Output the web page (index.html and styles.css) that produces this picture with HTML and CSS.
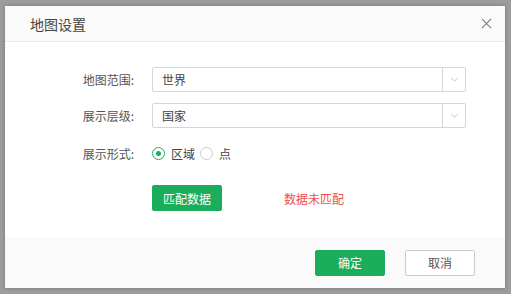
FILE: index.html
```html
<!DOCTYPE html>
<html>
<head>
  <title>地图设置</title>
  <link rel="stylesheet" href="styles.css">
</head>
<body>
  <div class="dialog">
    <!-- Header -->
    <div class="dialog-header">
      <span class="dialog-title">地图设置</span>
      <svg class="close-icon" viewBox="0 0 12 12" width="11" height="11">
        <path d="M1 1 L11 11 M11 1 L1 11" stroke="#777" stroke-width="1.1" fill="none"/>
      </svg>
    </div>
    <!-- Body -->
    <div class="dialog-body">
      <div class="form-row">
        <label class="form-label">地图范围:</label>
        <div class="select">
          <span class="select-value">世界</span>
          <span class="select-arrow">
            <svg viewBox="0 0 10 6" width="9" height="5"><path d="M1 1 L5 5 L9 1" stroke="#bbb" fill="none"/></svg>
          </span>
        </div>
      </div>
      <div class="form-row">
        <label class="form-label">展示层级:</label>
        <div class="select">
          <span class="select-value">国家</span>
          <span class="select-arrow">
            <svg viewBox="0 0 10 6" width="9" height="5"><path d="M1 1 L5 5 L9 1" stroke="#bbb" fill="none"/></svg>
          </span>
        </div>
      </div>
      <div class="form-row">
        <label class="form-label">展示形式:</label>
        <div class="radios">
          <span class="radio checked"></span><span class="radio-text">区域</span>
          <span class="radio"></span><span class="radio-text">点</span>
        </div>
      </div>
      <div class="match-row">
        <button class="btn btn-primary">匹配数据</button>
        <span class="match-status">数据未匹配</span>
      </div>
    </div>
    <!-- Footer -->
    <div class="dialog-footer">
      <button class="btn btn-primary">确定</button>
      <button class="btn btn-default">取消</button>
    </div>
  </div>
</body>
</html>
```

FILE: styles.css
```css
/* Base */
html, body {
  margin: 0;
  padding: 0;
  height: 100%;
}
body {
  background: #9d9d9d;
  font-family: "Noto Sans CJK SC", "Liberation Sans", sans-serif;
  font-size: 12px;
  color: #555;
  padding: 6px 6px 0 5px;
  box-sizing: border-box;
}
/* Dialog */
.dialog {
  width: 500px;
  height: 282px;
  background: #fff;
  display: flex;
  flex-direction: column;
  box-shadow: 0 0 4px rgba(0,0,0,0.25);
}
.dialog-header {
  height: 35px;
  background: #fafafa;
  border-bottom: 1px solid #e8e8e8;
  display: flex;
  align-items: center;
  justify-content: space-between;
  padding: 0 13px 0 25px;
  flex-shrink: 0;
}
.dialog-title {
  font-size: 14px;
  color: #444;
}
.dialog-body {
  flex: 1;
  padding: 25px 0 0 0;
}
.form-row {
  display: flex;
  align-items: center;
  margin-bottom: 11px;
}
.form-label {
  width: 129px;
  text-align: right;
  padding-right: 18px;
  color: #555;
}
.select {
  width: 312px;
  height: 23px;
  border: 1px solid #d6d6d6;
  border-radius: 2px;
  display: flex;
  align-items: center;
}
.select-value {
  flex: 1;
  padding-left: 9px;
  color: #444;
}
.select-arrow {
  width: 22px;
  height: 100%;
  border-left: 1px solid #d6d6d6;
  display: flex;
  align-items: center;
  justify-content: center;
}
.radios {
  display: flex;
  align-items: center;
  height: 28px;
}
.radio {
  width: 11px;
  height: 11px;
  border: 1px solid #ccc;
  border-radius: 50%;
  position: relative;
  margin-right: 6px;
}
.radio.checked {
  border-color: #1aad5c;
}
.radio.checked::after {
  content: "";
  position: absolute;
  top: 3px;
  left: 3px;
  width: 5px;
  height: 5px;
  border-radius: 50%;
  background: #1aad5c;
}
.radio-text {
  margin-right: 5px;
  color: #444;
}
.match-row {
  display: flex;
  align-items: center;
  padding-left: 147px;
  margin-top: 18px;
}
.match-status {
  color: #f04b4b;
  margin-left: 62px;
}
/* Buttons */
.btn {
  width: 70px;
  height: 26px;
  border-radius: 2px;
  font-family: inherit;
  font-size: 12px;
  cursor: pointer;
  padding: 0;
}
.btn-primary {
  background: #1aad5c;
  border: 1px solid #1aad5c;
  color: #fff;
}
.btn-default {
  background: #fff;
  border: 1px solid #ccc;
  color: #555;
}
.dialog-footer {
  height: 51px;
  background: #fafafa;
  display: flex;
  align-items: center;
  justify-content: flex-end;
  gap: 20px;
  padding-right: 30px;
  flex-shrink: 0;
}
```
